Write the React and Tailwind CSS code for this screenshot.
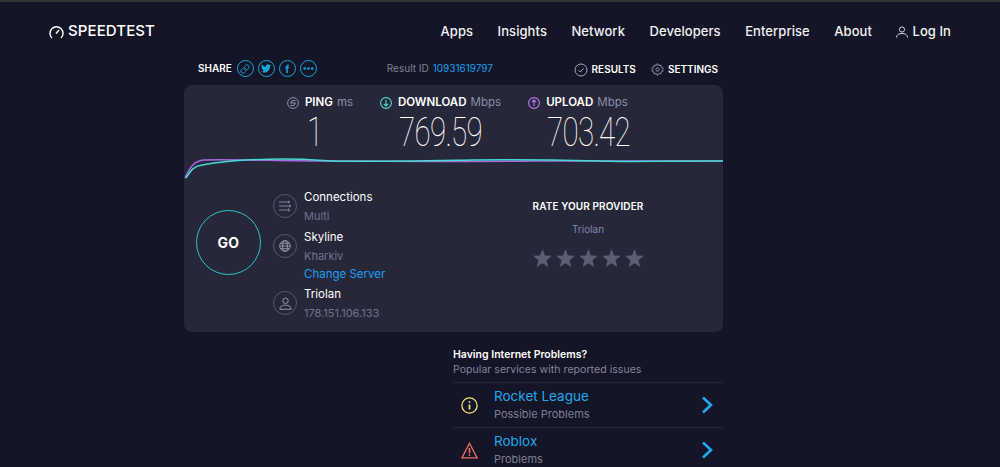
import { Link, Ellipsis } from 'lucide-react';

const NAV = ['Apps', 'Insights', 'Network', 'Developers', 'Enterprise', 'About'];

const Circle = ({ children }) => (
  <span className="w-[17px] h-[17px] rounded-full border-[1.5px] border-[#1ca6e0] flex items-center justify-center text-[#1ca6e0]">
    {children}
  </span>
);

const Stat = ({ icon, label, unit, value, className, numClass }) => (
  <div className={`flex flex-col items-center ${className}`}>
    <div className="flex items-center h-[17px] text-[11.5px] leading-none">
      {icon}
      <span className="ml-[6px] font-semibold text-white">{label}</span>
      <span className="ml-[4px] text-[#8b8fa8]">{unit}</span>
    </div>
    <div className={`mt-[2px] h-[38px] leading-[38px] text-[41px] font-thin text-white font-['Roboto',sans-serif] tracking-[-1px] scale-x-[0.72] ${numClass}`}>
      {value}
    </div>
  </div>
);

const InfoRow = ({ icon, title, sub, link }) => (
  <div className="flex">
    <span className="w-[24px] h-[24px] mt-[6px] rounded-full border border-[#55586b] flex items-center justify-center shrink-0">
      {icon}
    </span>
    <div className="ml-[7px]">
      <div className="h-[19px] leading-[19px] text-[11.5px] text-white">{title}</div>
      <div className="h-[19px] leading-[19px] text-[11px] text-[#6f7287]">{sub}</div>
      {link ? <div className="h-[17px] leading-[17px] text-[11.5px] text-[#1c9ef0]">{link}</div> : null}
    </div>
  </div>
);

const Star = () => (
  <svg width="19" height="18" viewBox="0 0 24 23" fill="#5b5e72">
    <path d="M12 0l3.1 8.2 8.9.5-6.9 5.6 2.3 8.7L12 18.2 4.6 23l2.3-8.7L0 8.7l8.9-.5z" />
  </svg>
);

const Problem = ({ icon, title, sub }) => (
  <div className="flex items-center h-[45px] border-t border-[#25273a]">
    <span className="w-[41px] pl-[8px] flex items-center shrink-0">{icon}</span>
    <div className="flex-1 pb-[2px]">
      <div className="h-[19px] leading-[19px] text-[13.5px] text-[#1fa9f0]">{title}</div>
      <div className="h-[16px] leading-[16px] text-[11px] text-[#7d7f90]">{sub}</div>
    </div>
    <svg className="mr-[10px]" width="12" height="18" viewBox="0 0 12 18" fill="none" stroke="#1fa9f0" strokeWidth="2.6">
      <path d="M2 1.5 L10 9 L2 16.5" />
    </svg>
  </div>
);

export default function App() {
  return (
    <div className="h-[467px] overflow-hidden bg-[#141526] font-['Inter',sans-serif] border-t-2 border-[#333438]">
      <header className="flex items-center justify-between h-[58px] pt-[1px] pl-[49px] pr-[49px]">
        <div className="flex items-center text-white">
          <svg width="15" height="14" viewBox="0 0 15 14" fill="none" stroke="white" strokeWidth="1.4">
            <path d="M3 13 A6.5 6.5 0 1 1 12 13" />
            <path d="M7 8.5 L10 5" />
          </svg>
          <span className="ml-[4px] text-[15px] font-medium tracking-[0.1px]">SPEEDTEST</span>
        </div>
        <nav className="flex items-center gap-[24.5px] text-[13px] font-medium tracking-[0.07px] text-[#f2f2f5]">
          {NAV.map((item) => (
            <span key={item}>{item}</span>
          ))}
          <span className="flex items-center gap-[4px]">
            <svg width="12" height="12" viewBox="0 0 12 12" fill="none" stroke="#d5d6dc" strokeWidth="1">
              <circle cx="6" cy="3.5" r="2.6" />
              <path d="M.5 11.5c0-3 2.5-4 5.5-4s5.5 1 5.5 4" />
            </svg>
            Log In
          </span>
        </nav>
      </header>

      <main className="ml-[184px] w-[539px]">
        <div className="flex items-center h-[25px] pb-[8px] text-[10px] font-semibold text-white">
          <span className="ml-[14px]">SHARE</span>
          <div className="ml-[5px] flex items-center gap-[4px]">
            <Circle><Link size={10} strokeWidth={2.2} /></Circle>
            <Circle>
              <svg width="10" height="9" viewBox="0 0 24 20" fill="currentColor">
                <path d="M24 2.4a10 10 0 0 1-2.8.8A5 5 0 0 0 23.3.5a10 10 0 0 1-3.1 1.2 4.9 4.9 0 0 0-8.4 4.5A14 14 0 0 1 1.7.9a4.9 4.9 0 0 0 1.5 6.6 5 5 0 0 1-2.2-.6 4.9 4.9 0 0 0 3.9 4.9 5 5 0 0 1-2.2.1 4.9 4.9 0 0 0 4.6 3.4A10 10 0 0 1 0 17.4 14 14 0 0 0 7.5 19.6c9.1 0 14.3-7.7 14-14.6A10 10 0 0 0 24 2.4z" />
              </svg>
            </Circle>
            <Circle><span className="text-[10px] font-bold leading-none">f</span></Circle>
            <Circle><Ellipsis size={13} strokeWidth={3} /></Circle>
          </div>
          <span className="ml-[70px] font-normal text-[#7f8299]">Result ID</span>
          <span className="ml-[4px] font-normal text-[#1c9ef0]">10931619797</span>
          <span className="ml-auto flex items-center gap-[4px] mt-[2px]">
            <svg width="14" height="14" viewBox="0 0 14 14" fill="none" stroke="#a5a7b5" strokeWidth="1">
              <circle cx="7" cy="7" r="6" />
              <path d="M4.5 7.2 L6.3 9 L9.6 5.3" />
            </svg>
            RESULTS
          </span>
          <span className="ml-[15px] mr-[5px] flex items-center gap-[4px] mt-[2px]">
            <svg width="13" height="13" viewBox="0 0 24 24" fill="none" stroke="#a5a7b5" strokeWidth="1.6">
              <circle cx="12" cy="12" r="3" />
              <path d="M12 1l2 3.5 4-.7 1 3.9 3.6 1.8L20.5 12l2.1 2.5-3.6 1.8-1 3.9-4-.7-2 3.5-2-3.5-4 .7-1-3.9-3.6-1.8L3.5 12 1.4 9.5 5 7.7l1-3.9 4 .7z" />
            </svg>
            SETTINGS
          </span>
        </div>

        <section className="bg-[#26283a] rounded-lg h-[247px] flex flex-col">
          <div className="flex pt-[9px] h-[70px]">
            <Stat
              className="ml-[103px] w-[66px]"
              numClass="mr-[10px]"
              value="1"
              label="PING"
              unit="ms"
              icon={
                <svg width="12" height="12" viewBox="0 0 12 12" fill="none" stroke="#8b8fa8" strokeWidth="1">
                  <circle cx="6" cy="6" r="5.4" />
                  <path d="M8.5 3.5H5L3.5 6h5L7 8.5H3.5" />
                </svg>
              }
            />
            <Stat
              className="ml-[26px] w-[123px]"
              numClass=""
              value="769.59"
              label="DOWNLOAD"
              unit="Mbps"
              icon={
                <svg width="12" height="12" viewBox="0 0 12 12" fill="none" stroke="#4fdccc" strokeWidth="1.1">
                  <circle cx="6" cy="6" r="5.4" />
                  <path d="M6 3v6M3.8 6.8 6 9l2.2-2.2" />
                </svg>
              }
            />
            <Stat
              className="ml-[26px] w-[100px]"
              numClass="ml-[21px]"
              value="703.42"
              label="UPLOAD"
              unit="Mbps"
              icon={
                <svg width="12" height="12" viewBox="0 0 12 12" fill="none" stroke="#b67cf0" strokeWidth="1.1">
                  <circle cx="6" cy="6" r="5.4" />
                  <path d="M6 9V3M3.8 5.2 6 3l2.2 2.2" />
                </svg>
              }
            />
          </div>

          <svg className="block" width="539" height="28" viewBox="0 0 539 28" fill="none" strokeWidth="1.5">
            <path d="M1 23 C6 12 10 6 20 5 C40 4 100 6 140 6 C200 6 300 7 350 6 C400 6 430 6 539 6" stroke="#a868e8" />
            <path d="M2 23 C7 15 10 11 18 10 C40 6 70 4 100 4 C125 4 130 5 150 6 C180 7 230 6 290 5 C350 4 410 6 440 6.5 C470 6 500 6 539 6" stroke="#45dcd0" />
          </svg>

          <div className="flex flex-1">
            <div className="ml-[12px] mt-[27px] w-[65px] h-[65px] rounded-full border border-[#2bc3c9] flex items-center justify-center text-[14px] font-bold tracking-wide text-white">
              GO
            </div>
            <div className="ml-[12px] mt-[5px] flex flex-col">
              <InfoRow
                title="Connections"
                sub="Multi"
                icon={
                  <svg width="14" height="12" viewBox="0 0 14 12" fill="none" stroke="#7f8299" strokeWidth="1">
                    <path d="M1 2h10M1 6h11M1 10h10M10 .8 12 2l-2 1.2M11 4.8 13 6l-2 1.2M10 8.8l2 1.2-2 1.2" />
                  </svg>
                }
              />
              <div className="mt-[2px]">
                <InfoRow
                  title="Skyline"
                  sub="Kharkiv"
                  link="Change Server"
                  icon={
                    <svg width="12" height="12" viewBox="0 0 12 12" fill="none" stroke="#9a9cae" strokeWidth="0.9">
                      <circle cx="6" cy="6" r="5.3" />
                      <ellipse cx="6" cy="6" rx="2.4" ry="5.3" />
                      <path d="M.7 6h10.6M1.5 3.3h9M1.5 8.7h9" />
                    </svg>
                  }
                />
              </div>
              <div className="mt-[2px]">
                <InfoRow
                  title="Triolan"
                  sub="178.151.106.133"
                  icon={
                    <svg width="13" height="13" viewBox="0 0 12 12" fill="none" stroke="#9a9cae" strokeWidth="0.9">
                      <circle cx="6" cy="3.5" r="2.5" />
                      <path d="M.8 11.3c0-2.8 2.4-3.8 5.2-3.8s5.2 1 5.2 3.8z" />
                    </svg>
                  }
                />
              </div>
            </div>
            <div className="ml-auto mr-[20px] w-[230px] pt-[16px] flex flex-col items-center">
              <div className="h-[14px] leading-[14px] text-[10px] font-semibold tracking-[0.1px] text-white">RATE YOUR PROVIDER</div>
              <div className="mt-[9px] h-[14px] leading-[14px] text-[10px] text-[#7d86b5]">Triolan</div>
              <div className="mt-[13px] flex gap-[4px]">
                <Star />
                <Star />
                <Star />
                <Star />
                <Star />
              </div>
            </div>
          </div>
        </section>

        <section className="ml-[269px] mt-[15px]">
          <div className="h-[15px] leading-[15px] text-[10.5px] font-semibold text-white">Having Internet Problems?</div>
          <div className="h-[15px] leading-[15px] text-[10.5px] tracking-[0.05px] text-[#85879a] mb-[5px]">Popular services with reported issues</div>
          <Problem
            title="Rocket League"
            sub="Possible Problems"
            icon={
              <svg width="17" height="17" viewBox="0 0 17 17" fill="none" stroke="#f0e67a" strokeWidth="1.3">
                <circle cx="8.5" cy="8.5" r="7.6" />
                <path d="M8.5 7.5v5M8.5 4.2v1.6" strokeWidth="1.7" />
              </svg>
            }
          />
          <Problem
            title="Roblox"
            sub="Problems"
            icon={
              <svg width="17" height="17" viewBox="0 0 17 17" fill="none" stroke="#ee6f60" strokeWidth="1.3">
                <path d="M8.5 1.2 16 15.8H1z" />
                <path d="M8.5 6v5.5M8.5 12.5v1.5" strokeWidth="1.6" />
              </svg>
            }
          />
        </section>
      </main>
    </div>
  );
}
